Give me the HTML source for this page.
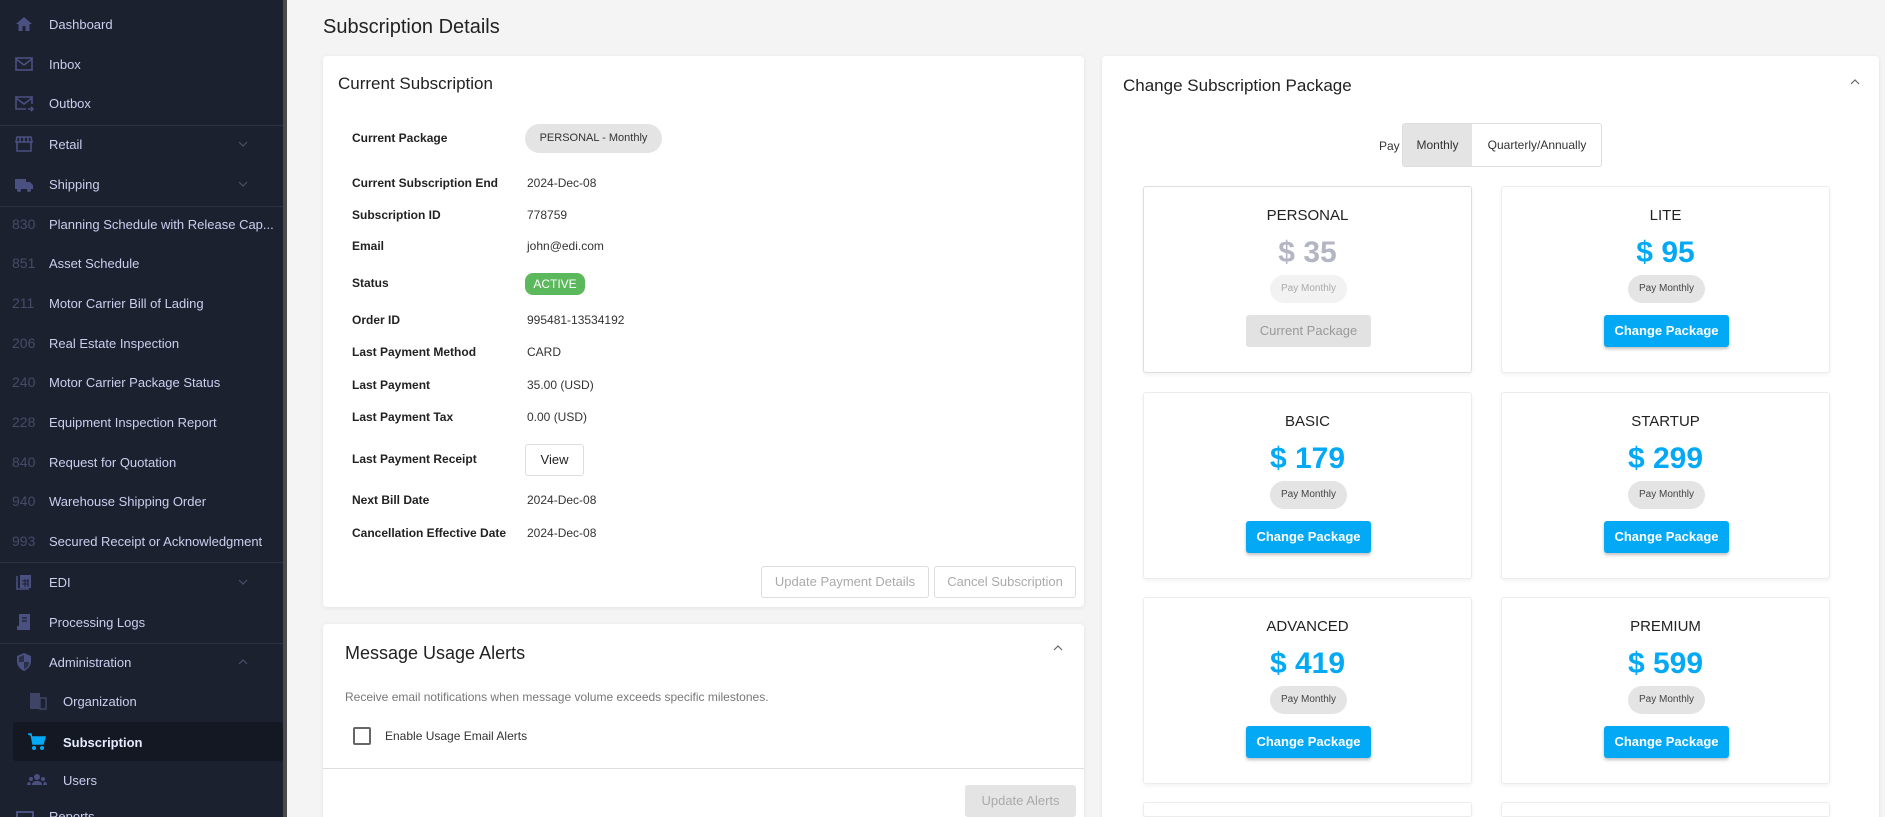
<!DOCTYPE html>
<html><head><meta charset="utf-8"><style>
*{box-sizing:border-box;margin:0;padding:0}
html,body{width:1885px;height:817px;overflow:hidden}
body{background:#f4f4f4;font-family:"Liberation Sans",sans-serif}
#w{position:relative;width:1885px;height:817px;overflow:hidden}
.sb{position:absolute;left:0;top:0;width:283px;height:817px;background:#1c2130}
.sbbar{position:absolute;left:283px;top:0;width:4px;height:817px;background:#4a4a4a}
.it{position:absolute;left:0;width:283px;height:36px;display:flex;align-items:center;color:#c9d0ee;font-size:13px}
.it .ic{position:absolute;left:14px;width:20px;height:20px}
.it .lb{position:absolute;left:49px}
.it .num{position:absolute;left:12px;color:#454c68;font-size:14px}
.it .chev{position:absolute;left:238px;width:10px;height:10px}
.div{position:absolute;left:0;width:283px;height:1px;background:#2c3244}
.a{position:absolute}
.card{position:absolute;background:#fff;border-radius:4px;box-shadow:0 1px 4px rgba(0,0,0,.08)}
.lbl{position:absolute;left:352px;font-size:12px;font-weight:bold;color:#222;transform:translateY(-50%)}
.val{position:absolute;left:527px;font-size:12px;color:#333;transform:translateY(-50%)}
.pk{position:absolute;width:329px;height:187px;background:#fff;border:1px solid #ececec;border-radius:3px;box-shadow:0 2px 4px rgba(0,0,0,.05);text-align:center}
.pk .n{position:absolute;top:20px;left:0;right:0;font-size:15px;color:#222}
.pk .p{position:absolute;top:49px;left:0;right:0;font-size:30px;font-weight:bold;color:#03a9f4}
.pk .pm{position:absolute;top:88px;left:126px;width:77px;height:28px;border-radius:14px;background:#e4e4e4;font-size:10px;line-height:28px;color:#444}
.pk .b{position:absolute;top:128px;left:102px;width:125px;height:32px;border-radius:3px;background:#03a9f4;color:#fff;font-size:13px;font-weight:bold;line-height:32px;box-shadow:0 2px 3px rgba(0,0,0,.25)}
.btn{position:absolute;border:1px solid #ddd;border-radius:3px;color:#aaa;font-size:13px;text-align:center;background:#fff}
</style></head><body><div id="w">
<div class="sb">
<div class="it" style="top:6px"><svg class="ic" viewBox="0 0 20 20"><path d="M10 3L2 10h2.5v7h4v-5h3v5h4v-7H18z" fill="#4a5080"/></svg><span class="lb">Dashboard</span></div>
<div class="it" style="top:46px"><svg class="ic" viewBox="0 0 20 20"><rect x="2" y="4" width="16" height="12" fill="none" stroke="#4a5080" stroke-width="1.6"/><path d="M2 5l8 6 8-6" fill="none" stroke="#4a5080" stroke-width="1.6"/></svg><span class="lb">Inbox</span></div>
<div class="it" style="top:85px"><svg class="ic" viewBox="0 0 20 20"><path d="M12 16H2V4h16v7M2 5l8 6 8-6M14 16h5M17 14l2 2-2 2" fill="none" stroke="#4a5080" stroke-width="1.6"/></svg><span class="lb">Outbox</span></div>
<div class="div" style="top:125px"></div>
<div class="it" style="top:126px"><svg class="ic" viewBox="0 0 20 20"><path d="M3 3h14l1 5H2zM3 8v9h14V8M6 3v5M10 3v5M14 3v5" fill="none" stroke="#4a5080" stroke-width="1.6"/></svg><span class="lb">Retail</span><svg class="chev" viewBox="0 0 10 10"><path d="M1 3l4 4 4-4" fill="none" stroke="#4a5068" stroke-width="1.2"/></svg></div>
<div class="it" style="top:166px"><svg class="ic" viewBox="0 0 20 20"><path d="M1 5h11v10H1zM12 8h4l3 3v4h-7z" fill="#4a5080"/><circle cx="5" cy="16" r="2" fill="#4a5080"/><circle cx="15" cy="16" r="2" fill="#4a5080"/></svg><span class="lb">Shipping</span><svg class="chev" viewBox="0 0 10 10"><path d="M1 3l4 4 4-4" fill="none" stroke="#4a5068" stroke-width="1.2"/></svg></div>
<div class="div" style="top:206px"></div>
<div class="it" style="top:206px"><span class="num">830</span><span class="lb">Planning Schedule with Release Cap...</span></div>
<div class="it" style="top:245px"><span class="num">851</span><span class="lb">Asset Schedule</span></div>
<div class="it" style="top:285px"><span class="num">211</span><span class="lb">Motor Carrier Bill of Lading</span></div>
<div class="it" style="top:325px"><span class="num">206</span><span class="lb">Real Estate Inspection</span></div>
<div class="it" style="top:364px"><span class="num">240</span><span class="lb">Motor Carrier Package Status</span></div>
<div class="it" style="top:404px"><span class="num">228</span><span class="lb">Equipment Inspection Report</span></div>
<div class="it" style="top:444px"><span class="num">840</span><span class="lb">Request for Quotation</span></div>
<div class="it" style="top:483px"><span class="num">940</span><span class="lb">Warehouse Shipping Order</span></div>
<div class="it" style="top:523px"><span class="num">993</span><span class="lb">Secured Receipt or Acknowledgment</span></div>
<div class="div" style="top:562px"></div>
<div class="it" style="top:564px"><svg class="ic" viewBox="0 0 20 20"><path d="M3 4v13h12" fill="none" stroke="#4a5080" stroke-width="1.6"/><rect x="6" y="3" width="11" height="13" fill="#4a5080"/><path d="M8 9h7M8 12h7M11 7v8M14 7v8" stroke="#1c2130" stroke-width="1"/></svg><span class="lb">EDI</span><svg class="chev" viewBox="0 0 10 10"><path d="M1 3l4 4 4-4" fill="none" stroke="#4a5068" stroke-width="1.2"/></svg></div>
<div class="it" style="top:604px"><svg class="ic" viewBox="0 0 20 20"><rect x="5" y="2" width="11" height="14" fill="#4a5080"/><rect x="3" y="14" width="13" height="4" fill="#4a5080"/><path d="M8 6h5M8 9h5" stroke="#1c2130" stroke-width="1.2"/></svg><span class="lb">Processing Logs</span></div>
<div class="div" style="top:643px"></div>
<div class="it" style="top:644px"><svg class="ic" viewBox="0 0 20 20"><path d="M10 1L3 4v5c0 5 3 8 7 10 4-2 7-5 7-10V4z" fill="#4a5080"/><path d="M10 3v7H5V5zM10 10h5c0 4-2 6-5 7z" fill="#2a3048"/></svg><span class="lb">Administration</span><svg class="chev" viewBox="0 0 10 10"><path d="M1 7l4-4 4 4" fill="none" stroke="#4a5068" stroke-width="1.2"/></svg></div>
<div class="it" style="top:683px"><svg class="ic" style="left:28px" viewBox="0 0 20 20"><rect x="2" y="2" width="10" height="16" fill="#3e4466"/><rect x="12" y="7" width="6" height="11" fill="none" stroke="#3e4466" stroke-width="1.5"/></svg><span class="lb" style="left:63px">Organization</span></div>
<div class="a" style="left:13px;top:722px;width:270px;height:39px;background:#141822;border-radius:3px"></div>
<div class="it" style="top:724px;color:#e6ebff;font-weight:bold"><svg class="ic" style="left:27px" viewBox="0 0 20 20"><path d="M1 2h3l2 10h10l2-7H5" fill="#03a9f4" stroke="#03a9f4" stroke-width="1.5"/><circle cx="7" cy="16" r="2" fill="#03a9f4"/><circle cx="15" cy="16" r="2" fill="#03a9f4"/></svg><span class="lb" style="left:63px">Subscription</span></div>
<div class="it" style="top:762px"><svg class="ic" style="left:27px" viewBox="0 0 20 20"><circle cx="10" cy="7" r="3" fill="#4a5080"/><circle cx="4" cy="9" r="2" fill="#4a5080"/><circle cx="16" cy="9" r="2" fill="#4a5080"/><path d="M5 15c0-3 2-4 5-4s5 1 5 4zM0 15c0-2 1-3 3-3l1 3zM20 15c0-2-1-3-3-3l-1 3z" fill="#4a5080"/></svg><span class="lb" style="left:63px">Users</span></div>
<div class="a" style="left:16px;top:811px;width:18px;height:6px;border:2px solid #4a5080;border-bottom:none"></div>
<div class="a" style="left:49px;top:810px;color:#c9d0ee;font-size:13px;line-height:13px;height:7px;overflow:hidden">Reports</div>
</div>
<div class="sbbar"></div>

<div class="a" style="left:323px;top:16px;font-size:20px;color:#222">Subscription Details</div>

<div class="card" style="left:323px;top:56px;width:761px;height:551px"></div>
<div class="a" style="left:338px;top:74px;font-size:17px;color:#222">Current Subscription</div>
<div class="lbl" style="top:138px">Current Package</div><div class="a" style="left:525px;top:124px;width:137px;height:29px;border-radius:15px;background:#e4e4e4;font-size:11px;color:#333;line-height:29px;text-align:center">PERSONAL - Monthly</div>
<div class="lbl" style="top:183px">Current Subscription End</div><div class="val" style="top:183px">2024-Dec-08</div>
<div class="lbl" style="top:215px">Subscription ID</div><div class="val" style="top:215px">778759</div>
<div class="lbl" style="top:246px">Email</div><div class="val" style="top:246px">john@edi.com</div>
<div class="lbl" style="top:283px">Status</div><div class="a" style="left:525px;top:273px;width:60px;height:22px;border-radius:8px;background:#5cb85c;color:#fff;font-size:12px;line-height:22px;text-align:center">ACTIVE</div>
<div class="lbl" style="top:320px">Order ID</div><div class="val" style="top:320px">995481-13534192</div>
<div class="lbl" style="top:352px">Last Payment Method</div><div class="val" style="top:352px">CARD</div>
<div class="lbl" style="top:385px">Last Payment</div><div class="val" style="top:385px">35.00 (USD)</div>
<div class="lbl" style="top:417px">Last Payment Tax</div><div class="val" style="top:417px">0.00 (USD)</div>
<div class="lbl" style="top:459px">Last Payment Receipt</div><div class="btn" style="left:525px;top:444px;width:59px;height:32px;line-height:30px;color:#222">View</div>
<div class="lbl" style="top:500px">Next Bill Date</div><div class="val" style="top:500px">2024-Dec-08</div>
<div class="lbl" style="top:533px">Cancellation Effective Date</div><div class="val" style="top:533px">2024-Dec-08</div>
<div class="btn" style="left:761px;top:566px;width:168px;height:32px;line-height:30px">Update Payment Details</div>
<div class="btn" style="left:934px;top:566px;width:142px;height:32px;line-height:30px">Cancel Subscription</div>

<div class="card" style="left:323px;top:624px;width:761px;height:200px"></div>
<div class="a" style="left:345px;top:643px;font-size:18px;color:#222">Message Usage Alerts</div>
<svg class="a" style="left:1053px;top:644px" width="10" height="8" viewBox="0 0 10 8"><path d="M1 6l4-4 4 4" fill="none" stroke="#666" stroke-width="1.2"/></svg>
<div class="a" style="left:345px;top:690px;font-size:12px;color:#777">Receive email notifications when message volume exceeds specific milestones.</div>
<div class="a" style="left:353px;top:727px;width:18px;height:18px;border:2px solid #666;border-radius:2px"></div>
<div class="a" style="left:385px;top:729px;font-size:12px;color:#333">Enable Usage Email Alerts</div>
<div class="a" style="left:323px;top:768px;width:761px;height:1px;background:#ddd"></div>
<div class="a" style="left:965px;top:785px;width:111px;height:32px;background:#e4e4e4;border-radius:3px;color:#aaa;font-size:13px;line-height:32px;text-align:center">Update Alerts</div>

<div class="card" style="left:1102px;top:56px;width:777px;height:780px"></div>
<div class="a" style="left:1123px;top:76px;font-size:17px;color:#222">Change Subscription Package</div>
<svg class="a" style="left:1850px;top:78px" width="10" height="8" viewBox="0 0 10 8"><path d="M1 6l4-4 4 4" fill="none" stroke="#666" stroke-width="1.2"/></svg>
<div class="a" style="left:1379px;top:139px;font-size:12px;color:#333">Pay</div>
<div class="a" style="left:1402px;top:123px;width:200px;height:44px;border:1px solid #ddd;border-radius:3px;overflow:hidden;background:#fff">
<div class="a" style="left:0;top:0;width:69px;height:44px;background:#e4e4e4;font-size:12px;color:#333;line-height:42px;text-align:center">Monthly</div>
<div class="a" style="left:69px;top:0;width:130px;height:44px;font-size:12px;color:#333;line-height:42px;text-align:center">Quarterly/Annually</div></div>

<div class="pk" style="left:1143px;top:186px;border-color:#ddd"><div class="n">PERSONAL</div><div class="p" style="color:#b3b5c3">$ 35</div><div class="pm" style="background:#f2f2f2;color:#aaa">Pay Monthly</div><div class="b" style="background:#e2e2e2;color:#999;font-weight:normal;box-shadow:none">Current Package</div></div>
<div class="pk" style="left:1501px;top:186px"><div class="n">LITE</div><div class="p">$ 95</div><div class="pm">Pay Monthly</div><div class="b">Change Package</div></div>
<div class="pk" style="left:1143px;top:392px"><div class="n">BASIC</div><div class="p">$ 179</div><div class="pm">Pay Monthly</div><div class="b">Change Package</div></div>
<div class="pk" style="left:1501px;top:392px"><div class="n">STARTUP</div><div class="p">$ 299</div><div class="pm">Pay Monthly</div><div class="b">Change Package</div></div>
<div class="pk" style="left:1143px;top:597px"><div class="n">ADVANCED</div><div class="p">$ 419</div><div class="pm">Pay Monthly</div><div class="b">Change Package</div></div>
<div class="pk" style="left:1501px;top:597px"><div class="n">PREMIUM</div><div class="p">$ 599</div><div class="pm">Pay Monthly</div><div class="b">Change Package</div></div>
<div class="pk" style="left:1143px;top:802px;height:15px"></div>
<div class="pk" style="left:1501px;top:802px;height:15px"></div>
</div></body></html>
